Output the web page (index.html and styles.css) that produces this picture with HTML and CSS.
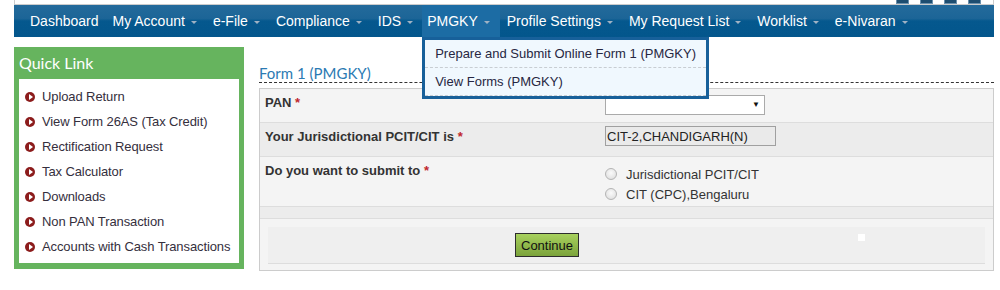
FILE: index.html
```html
<!DOCTYPE html>
<html lang="en">
<head>
  <meta charset="UTF-8">
  <title>Form 1 (PMGKY)</title>
  <link rel="stylesheet" href="styles.css">
</head>
<body>
<div class="page">

  <!-- Header strip with tool icons -->
  <div class="topbar">
    <span class="tool"></span>
    <span class="tool"></span>
    <span class="tool"></span>
    <span class="tool"></span>
  </div>

  <!-- Main menu -->
  <nav class="menu">
    <ul class="menu-list">
      <li class="menu-item"><a href="#">Dashboard</a></li>
      <li class="menu-item"><a href="#">My Account<i class="caret"></i></a></li>
      <li class="menu-item"><a href="#">e-File<i class="caret"></i></a></li>
      <li class="menu-item"><a href="#">Compliance<i class="caret"></i></a></li>
      <li class="menu-item"><a href="#">IDS<i class="caret"></i></a></li>
      <li class="menu-item active"><a href="#">PMGKY<i class="caret"></i></a>
        <ul class="submenu">
          <li><a href="#">Prepare and Submit Online Form 1 (PMGKY)</a></li>
          <li><a href="#">View Forms (PMGKY)</a></li>
        </ul>
      </li>
      <li class="menu-item"><a href="#">Profile Settings<i class="caret"></i></a></li>
      <li class="menu-item"><a href="#">My Request List<i class="caret"></i></a></li>
      <li class="menu-item"><a href="#">Worklist<i class="caret"></i></a></li>
      <li class="menu-item"><a href="#">e-Nivaran<i class="caret"></i></a></li>
    </ul>
  </nav>

  <div class="main">

    <!-- Quick links -->
    <aside class="quick">
      <h3 class="quick-title">Quick Link</h3>
      <ul class="quick-list">
        <li><i class="bullet"></i><a href="#">Upload Return</a></li>
        <li><i class="bullet"></i><a href="#">View Form 26AS (Tax Credit)</a></li>
        <li><i class="bullet"></i><a href="#">Rectification Request</a></li>
        <li><i class="bullet"></i><a href="#">Tax Calculator</a></li>
        <li><i class="bullet"></i><a href="#">Downloads</a></li>
        <li><i class="bullet"></i><a href="#">Non PAN Transaction</a></li>
        <li><i class="bullet"></i><a href="#">Accounts with Cash Transactions</a></li>
      </ul>
    </aside>

    <!-- Form -->
    <section class="content">
      <h2 class="form-title">Form 1 (PMGKY)</h2>
      <div class="form-box">
        <div class="form-row row-pan">
          <div class="label">PAN <span class="req">*</span></div>
          <div class="value">
            <div class="select"><span class="arrow">&#9660;</span></div>
          </div>
        </div>
        <div class="form-row row-cit shade">
          <div class="label">Your Jurisdictional PCIT/CIT is <span class="req">*</span></div>
          <div class="value">
            <div class="readonly">CIT-2,CHANDIGARH(N)</div>
          </div>
        </div>
        <div class="form-row row-submit">
          <div class="label">Do you want to submit to <span class="req">*</span></div>
          <div class="value radios">
            <label class="radio"><span class="dot"></span>Jurisdictional PCIT/CIT</label>
            <label class="radio"><span class="dot"></span>CIT (CPC),Bengaluru</label>
          </div>
        </div>
        <div class="form-row row-gap shade"></div>
        <div class="form-actions">
          <div class="actions-inner">
            <button class="btn-continue">Continue</button>
            <span class="marker"></span>
          </div>
        </div>
      </div>
    </section>

  </div>
</div>
</body>
</html>
```

FILE: styles.css
```css
body {
  margin: 0;
  font-family: "Liberation Sans", Arial, sans-serif;
  font-size: 13px;
  color: #333;
  background-color: #fff;
}
ul {
  margin: 0;
  padding: 0;
  list-style: none;
}
a {
  text-decoration: none;
}

.page {
  margin-left: 14px;
  width: 980px;
}

/* Header strip */
.topbar {
  height: 4px;
  border: 1px solid #ccc;
  border-top: none;
  display: flex;
  justify-content: flex-end;
  gap: 11px;
  padding-right: 12px;
  overflow: hidden;
}
.tool {
  width: 11px;
  height: 3px;
  background-color: #1d4d70;
  border: 1px solid #6a90ad;
  border-top: none;
}

/* Main menu */
.menu {
  height: 32px;
  background: linear-gradient(#236a9b 0%, #1c6597 42%, #05588e 50%, #03568c 100%);
  padding-left: 9px;
}
.menu-list {
  display: flex;
  height: 32px;
}
.menu-item {
  position: relative;
}
.menu-item > a {
  display: block;
  padding: 0 7px 0 7px;
  line-height: 32px;
  font-size: 14px;
  color: #fff;
}
.menu-item.active > a {
  background-color: #1c6ca4;
  padding-left: 5px;
  padding-right: 8px;
}
.caret {
  display: inline-block;
  width: 0;
  height: 0;
  margin-left: 6px;
  margin-right: 2px;
  border-left: 3px solid transparent;
  border-right: 3px solid transparent;
  border-top: 3px solid #9fb2c4;
  vertical-align: 2px;
}

/* Dropdown */
.submenu {
  position: absolute;
  top: 32px;
  left: 0;
  width: 281px;
  border: 3px solid #17609a;
  background-color: #f0f8fe;
  z-index: 10;
}
.submenu li {
  border-bottom: 1px dashed #c8cdd2;
}
.submenu a {
  display: block;
  padding: 6px 10px 5px;
  line-height: 16px;
  color: #272742;
}

.main {
  display: flex;
  gap: 15px;
  margin-top: 10px;
}

/* Quick links */
.quick {
  width: 220px;
  background-color: #66b45e;
  padding: 0 5px 6px;
  flex-shrink: 0;
  align-self: flex-start;
}
.quick-title {
  margin: 0;
  height: 32px;
  line-height: 32px;
  font-family: Lato, "Open Sans", sans-serif;
  font-weight: normal;
  font-size: 16px;
  color: #fff;
}
.quick-list {
  background-color: #fff;
  padding: 5px 0 4px 6px;
}
.quick-list li {
  height: 25px;
  display: flex;
  align-items: center;
  gap: 7px;
  white-space: nowrap;
}
.quick-list a {
  color: #352f3d;
  letter-spacing: -0.1px;
}
.bullet {
  position: relative;
  flex-shrink: 0;
  width: 10px;
  height: 10px;
  border-radius: 50%;
  background-color: #8c1c1c;
}
.bullet::after {
  content: "";
  position: absolute;
  left: 4px;
  top: 2px;
  border-top: 3px solid transparent;
  border-bottom: 3px solid transparent;
  border-left: 4px solid #fff;
}

/* Form */
.content {
  flex: 1;
}
.form-title {
  margin: 0;
  padding-top: 17px;
  height: 18px;
  line-height: 18px;
  font-family: Lato, "Open Sans", sans-serif;
  font-weight: normal;
  font-size: 15px;
  color: #2b7ab3;
  border-bottom: 1px dashed #333;
}
.form-box {
  margin-top: 5px;
  border: 1px solid #ccc;
  background-color: #f4f4f4;
}
.form-row {
  display: flex;
  align-items: flex-start;
  border-bottom: 1px solid #ddd;
}
.form-row.shade {
  background-color: #ececec;
}
.row-pan,
.row-cit {
  height: 33px;
}
.row-submit {
  height: 49px;
}
.row-gap {
  height: 11px;
}
.label {
  width: 335px;
  padding: 6px 5px;
  line-height: 15px;
  font-weight: bold;
  color: #333;
}
.req {
  color: #c0272d;
}
.value {
  flex: 1;
}

.select {
  position: relative;
  width: 158px;
  height: 18px;
  margin-top: 6px;
  border: 1px solid #aaa;
  background-color: #fff;
}
.arrow {
  position: absolute;
  right: 4px;
  top: 4px;
  font-size: 8px;
  color: #111;
}
.readonly {
  width: 168px;
  height: 18px;
  margin-top: 3px;
  padding-left: 1px;
  line-height: 19px;
  border: 1px solid #a0a0a0;
  background-color: #eaeaea;
  color: #222;
  white-space: nowrap;
}

.radios {
  padding-top: 7px;
}
.radio {
  display: flex;
  align-items: center;
  height: 20px;
  color: #333;
}
.dot {
  width: 10px;
  height: 10px;
  margin-right: 9px;
  border-radius: 50%;
  border: 1px solid #b4b4b4;
  background: radial-gradient(circle at 50% 40%, #fafafa 0%, #e4e4e4 70%, #d6d6d6 100%);
}

.form-actions {
  padding: 8px 8px 6px;
}
.actions-inner {
  display: flex;
  align-items: flex-start;
  height: 30px;
  padding: 6px 0 0 247px;
  background-color: #efefef;
  border-bottom: 1px solid #ddd;
}
.btn-continue {
  height: 24px;
  padding: 0 5px;
  font-family: "Liberation Sans", Arial, sans-serif;
  font-size: 13px;
  color: #111;
  border: 1px solid #2d2d2d;
  background: linear-gradient(#a8d15e, #7ba33b);
  cursor: pointer;
}
.marker {
  width: 7px;
  height: 7px;
  margin: 1px 0 0 279px;
  background-color: #fff;
}
```
